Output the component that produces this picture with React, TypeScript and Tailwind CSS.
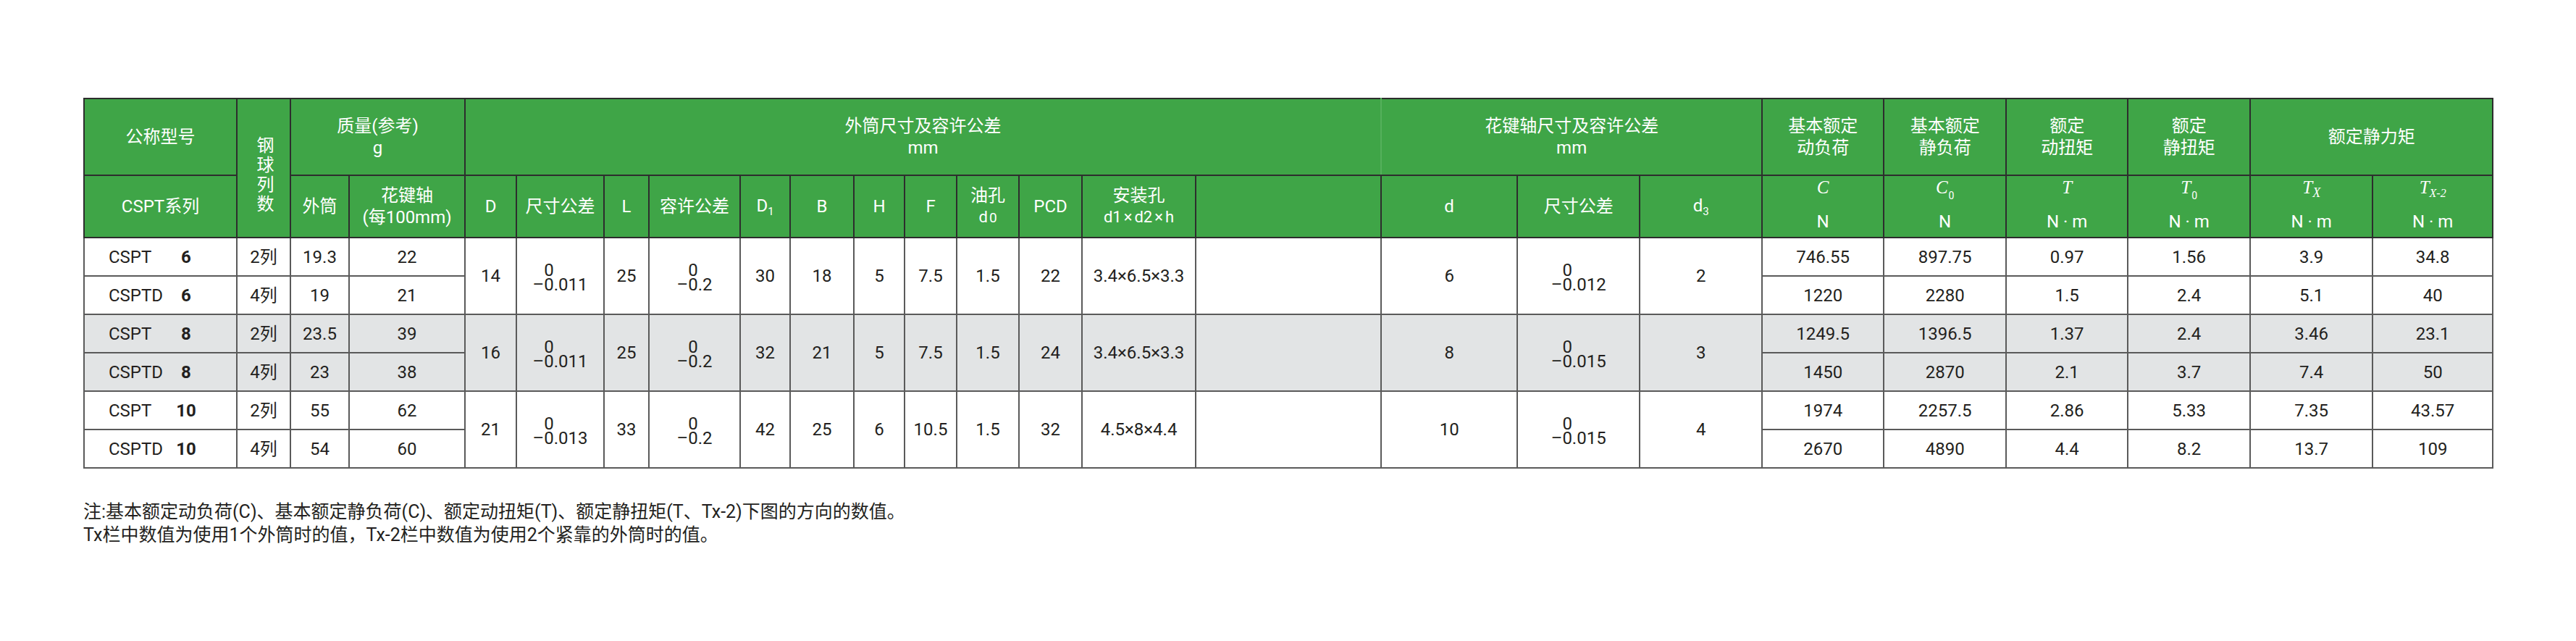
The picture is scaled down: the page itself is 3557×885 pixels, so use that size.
import type { ReactNode } from 'react';

// 列宽按原图像素量出来的，表格总宽 3326px
const COL_WIDTHS = [
  'w-[211px]', 'w-[74px]', 'w-[81px]', 'w-[160px]',
  'w-[71px]', 'w-[121px]', 'w-[62px]', 'w-[126px]', 'w-[69px]', 'w-[88px]',
  'w-[70px]', 'w-[72px]', 'w-[86px]', 'w-[87px]', 'w-[157px]', 'w-[256px]',
  'w-[188px]', 'w-[169px]', 'w-[169px]',
  'w-[168px]', 'w-[169px]', 'w-[168px]', 'w-[169px]', 'w-[169px]', 'w-[166px]',
];

type Item = {
  name: string;
  size: string;
  balls: string;
  outer: string;
  shaft: string;
  c: string;
  c0: string;
  t: string;
  t0: string;
  tx: string;
  tx2: string;
};

type Group = {
  D: string;
  tol: string;
  L: string;
  ltol: string;
  D1: string;
  B: string;
  H: string;
  F: string;
  oil: string;
  pcd: string;
  hole: string;
  d: string;
  dtol: string;
  d3: string;
  items: [Item, Item];
  gray?: boolean;
};

const GROUPS: Group[] = [
  {
    D: '14', tol: '–0.011', L: '25', ltol: '–0.2', D1: '30', B: '18', H: '5', F: '7.5',
    oil: '1.5', pcd: '22', hole: '3.4×6.5×3.3', d: '6', dtol: '–0.012', d3: '2',
    items: [
      { name: 'CSPT', size: '6', balls: '2列', outer: '19.3', shaft: '22', c: '746.55', c0: '897.75', t: '0.97', t0: '1.56', tx: '3.9', tx2: '34.8' },
      { name: 'CSPTD', size: '6', balls: '4列', outer: '19', shaft: '21', c: '1220', c0: '2280', t: '1.5', t0: '2.4', tx: '5.1', tx2: '40' },
    ],
  },
  {
    D: '16', tol: '–0.011', L: '25', ltol: '–0.2', D1: '32', B: '21', H: '5', F: '7.5',
    oil: '1.5', pcd: '24', hole: '3.4×6.5×3.3', d: '8', dtol: '–0.015', d3: '3',
    gray: true,
    items: [
      { name: 'CSPT', size: '8', balls: '2列', outer: '23.5', shaft: '39', c: '1249.5', c0: '1396.5', t: '1.37', t0: '2.4', tx: '3.46', tx2: '23.1' },
      { name: 'CSPTD', size: '8', balls: '4列', outer: '23', shaft: '38', c: '1450', c0: '2870', t: '2.1', t0: '3.7', tx: '7.4', tx2: '50' },
    ],
  },
  {
    D: '21', tol: '–0.013', L: '33', ltol: '–0.2', D1: '42', B: '25', H: '6', F: '10.5',
    oil: '1.5', pcd: '32', hole: '4.5×8×4.4', d: '10', dtol: '–0.015', d3: '4',
    items: [
      { name: 'CSPT', size: '10', balls: '2列', outer: '55', shaft: '62', c: '1974', c0: '2257.5', t: '2.86', t0: '5.33', tx: '7.35', tx2: '43.57' },
      { name: 'CSPTD', size: '10', balls: '4列', outer: '54', shaft: '60', c: '2670', c0: '4890', t: '4.4', t0: '8.2', tx: '13.7', tx2: '109' },
    ],
  },
];

const TH = 'border-2 border-[#2d2d2d] bg-[#3fa547] p-0 text-center align-middle text-[24px] font-normal leading-[30px] text-white';
const TD = 'border-2 border-[#5a5a5a] p-0 text-center align-middle text-[24px] leading-[28px] text-[#231f20]';

function Tol({ v }: { v: string }) {
  return (
    <span className="inline-flex flex-col items-start leading-[20px]">
      <span>
        <span className="invisible">–</span>0
      </span>
      <span>{v}</span>
    </span>
  );
}

function Sym({ children, unit }: { children: ReactNode; unit: string }) {
  return (
    <div className="flex flex-col items-center gap-[17px] pb-[6px]">
      <span className="h-[30px] font-['Liberation_Serif',serif] text-[25px] italic leading-[30px]">{children}</span>
      <span className="h-[30px] leading-[30px]">{unit}</span>
    </div>
  );
}

function Sub({ children }: { children: ReactNode }) {
  return <span className="relative top-[8px] ml-[1px] font-[Roboto,sans-serif] text-[14px] not-italic">{children}</span>;
}

function Two({ a, b }: { a: ReactNode; b: ReactNode }) {
  return (
    <>
      <div>{a}</div>
      <div>{b}</div>
    </>
  );
}

function GroupRows({ g }: { g: Group }) {
  const bg = g.gray ? 'bg-[#e2e4e5]' : 'bg-white';
  const [a, b] = g.items;

  const left = (it: Item) => (
    <>
      <td className={`${TD} pl-[33px] text-left`}>
        <span className="inline-block w-[90px]">{it.name}</span>
        <span className="inline-block w-[34px] text-center font-bold">{it.size}</span>
      </td>
      <td className={TD}>{it.balls}</td>
      <td className={TD}>{it.outer}</td>
      <td className={TD}>{it.shaft}</td>
    </>
  );

  const right = (it: Item) => (
    <>
      <td className={TD}>{it.c}</td>
      <td className={TD}>{it.c0}</td>
      <td className={TD}>{it.t}</td>
      <td className={TD}>{it.t0}</td>
      <td className={TD}>{it.tx}</td>
      <td className={TD}>{it.tx2}</td>
    </>
  );

  return (
    <>
      <tr className={`h-[53px] ${bg}`}>
        {left(a)}
        <td rowSpan={2} className={TD}>{g.D}</td>
        <td rowSpan={2} className={TD}><Tol v={g.tol} /></td>
        <td rowSpan={2} className={TD}>{g.L}</td>
        <td rowSpan={2} className={TD}><Tol v={g.ltol} /></td>
        <td rowSpan={2} className={TD}>{g.D1}</td>
        <td rowSpan={2} className={TD}>{g.B}</td>
        <td rowSpan={2} className={TD}>{g.H}</td>
        <td rowSpan={2} className={TD}>{g.F}</td>
        <td rowSpan={2} className={TD}>{g.oil}</td>
        <td rowSpan={2} className={TD}>{g.pcd}</td>
        <td rowSpan={2} className={TD}>{g.hole}</td>
        <td rowSpan={2} className={TD}></td>
        <td rowSpan={2} className={TD}>{g.d}</td>
        <td rowSpan={2} className={TD}><Tol v={g.dtol} /></td>
        <td rowSpan={2} className={TD}>{g.d3}</td>
        {right(a)}
      </tr>
      <tr className={`h-[53px] ${bg}`}>
        {left(b)}
        {right(b)}
      </tr>
    </>
  );
}

export default function App() {
  return (
    <div className="min-h-[885px] w-[3557px] bg-white pl-[115px] pt-[135px] font-[Roboto,'Noto_Sans_CJK_SC',sans-serif] text-[#231f20]">
      <table className="w-[3326px] table-fixed border-collapse">
        <colgroup>
          {COL_WIDTHS.map((w, i) => (
            <col key={i} className={w} />
          ))}
        </colgroup>
        <thead>
          <tr className="h-[106px]">
            <th className={TH}>公称型号</th>
            <th rowSpan={2} className={TH}>
              <div className="flex justify-center pt-[20px]">
                <span className="leading-[30px] tracking-[3px] [writing-mode:vertical-rl]">钢球列数</span>
              </div>
            </th>
            <th colSpan={2} className={TH}><Two a="质量(参考)" b="g" /></th>
            <th colSpan={12} className={`${TH} border-r-[#55b05b]`}><Two a="外筒尺寸及容许公差" b="mm" /></th>
            <th colSpan={3} className={TH}><Two a="花键轴尺寸及容许公差" b="mm" /></th>
            <th className={TH}><Two a="基本额定" b="动负荷" /></th>
            <th className={TH}><Two a="基本额定" b="静负荷" /></th>
            <th className={TH}><Two a="额定" b="动扭矩" /></th>
            <th className={TH}><Two a="额定" b="静扭矩" /></th>
            <th colSpan={2} className={TH}>额定静力矩</th>
          </tr>
          <tr className="h-[86px]">
            <th className={TH}>CSPT系列</th>
            <th className={TH}>外筒</th>
            <th className={TH}><Two a="花键轴" b="(每100mm)" /></th>
            <th className={TH}>D</th>
            <th className={TH}>尺寸公差</th>
            <th className={TH}>L</th>
            <th className={TH}>容许公差</th>
            <th className={TH}>D<span className="relative top-[5px] text-[15px]">1</span></th>
            <th className={TH}>B</th>
            <th className={TH}>H</th>
            <th className={TH}>F</th>
            <th className={`${TH} leading-[27px]`}>
              <div>油孔</div>
              <div className="text-[22px]">d<span className="ml-[2px] text-[19px]">0</span></div>
            </th>
            <th className={TH}>PCD</th>
            <th className={`${TH} leading-[24px]`}>
              <div>安装孔</div>
              <div className="text-[22px]">d1<span className="mx-[3px]">×</span>d2<span className="mx-[3px]">×</span>h</div>
            </th>
            <th className={TH}></th>
            <th className={TH}>d</th>
            <th className={TH}>尺寸公差</th>
            <th className={TH}>d<span className="relative top-[5px] text-[15px]">3</span></th>
            <th className={TH}><Sym unit="N">C</Sym></th>
            <th className={TH}><Sym unit="N">C<Sub>0</Sub></Sym></th>
            <th className={TH}><Sym unit="N · m">T</Sym></th>
            <th className={TH}><Sym unit="N · m">T<Sub>0</Sub></Sym></th>
            <th className={TH}>
              <Sym unit="N · m">
                T<span className="relative top-[5px] text-[18px]">X</span>
              </Sym>
            </th>
            <th className={TH}>
              <Sym unit="N · m">
                T<span className="relative top-[5px] text-[16px]">X-2</span>
              </Sym>
            </th>
          </tr>
        </thead>
        <tbody>
          {GROUPS.map((g) => (
            <GroupRows key={g.D} g={g} />
          ))}
        </tbody>
      </table>

      <div className="mt-[44px] text-[25px] leading-[32px]">
        <p>注:基本额定动负荷(C)、基本额定静负荷(C)、额定动扭矩(T)、额定静扭矩(T、Tx-2)下图的方向的数值。</p>
        <p>Tx栏中数值为使用1个外筒时的值，Tx-2栏中数值为使用2个紧靠的外筒时的值。</p>
      </div>
    </div>
  );
}
